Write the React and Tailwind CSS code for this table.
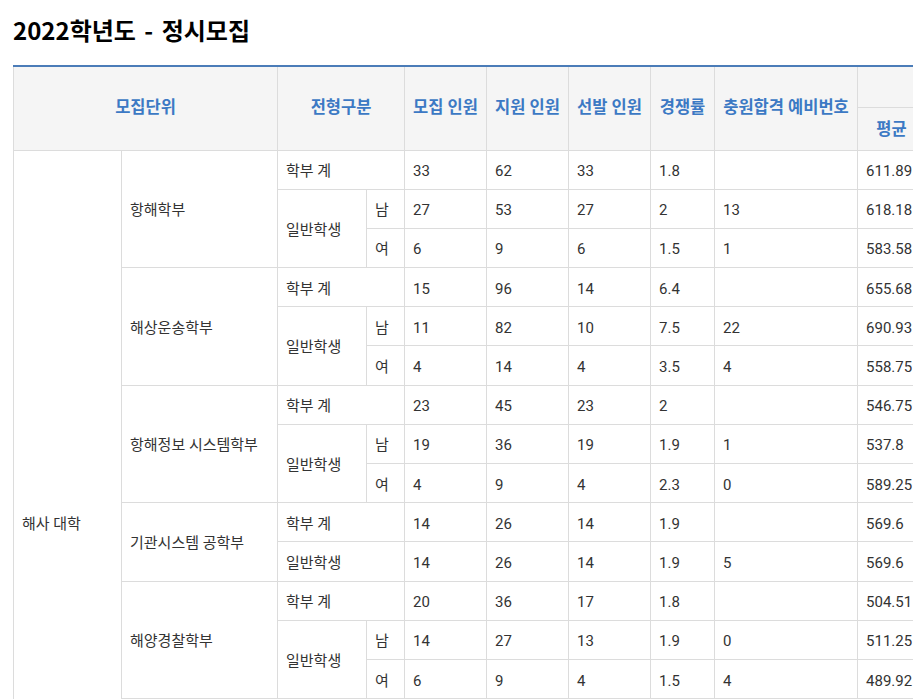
import React from 'react';

const units = [
  {
    name: '항해학부',
    rows: [
      { type: '학부 계', v: ['33', '62', '33', '1.8', '', '611.89', '651.20', '570.40'] },
      { type: '일반학생', g: '남', v: ['27', '53', '27', '2', '13', '618.18', '651.20', '590.10'] },
      { g: '여', v: ['6', '9', '6', '1.5', '1', '583.58', '612.30', '570.40'] },
    ],
  },
  {
    name: '해상운송학부',
    rows: [
      { type: '학부 계', v: ['15', '96', '14', '6.4', '', '655.68', '712.50', '540.20'] },
      { type: '일반학생', g: '남', v: ['11', '82', '10', '7.5', '22', '690.93', '712.50', '660.10'] },
      { g: '여', v: ['4', '14', '4', '3.5', '4', '558.75', '590.40', '540.20'] },
    ],
  },
  {
    name: '항해정보 시스템학부',
    rows: [
      { type: '학부 계', v: ['23', '45', '23', '2', '', '546.75', '610.20', '500.30'] },
      { type: '일반학생', g: '남', v: ['19', '36', '19', '1.9', '1', '537.8', '601.50', '500.30'] },
      { g: '여', v: ['4', '9', '4', '2.3', '0', '589.25', '610.20', '560.10'] },
    ],
  },
  {
    name: '기관시스템 공학부',
    rows: [
      { type: '학부 계', v: ['14', '26', '14', '1.9', '', '569.6', '620.40', '520.80'] },
      { type: '일반학생', v: ['14', '26', '14', '1.9', '5', '569.6', '620.40', '520.80'] },
    ],
  },
  {
    name: '해양경찰학부',
    rows: [
      { type: '학부 계', v: ['20', '36', '17', '1.8', '', '504.51', '560.30', '450.20'] },
      { type: '일반학생', g: '남', v: ['14', '27', '13', '1.9', '0', '511.25', '560.30', '460.70'] },
      { g: '여', v: ['6', '9', '4', '1.5', '4', '489.92', '530.10', '450.20'] },
    ],
  },
  {
    name: '기관공학부',
    rows: [
      { type: '학부 계', v: ['18', '30', '18', '1.7', '', '540.12', '590.00', '500.10'] },
      { type: '일반학생', g: '남', v: ['15', '25', '15', '1.7', '3', '542.30', '590.00', '500.10'] },
      { g: '여', v: ['3', '5', '3', '1.7', '1', '530.44', '560.20', '510.00'] },
    ],
  },
  {
    name: '해양플랜트 운영학과',
    rows: [
      { type: '학부 계', v: ['10', '18', '10', '1.8', '', '520.40', '570.30', '480.50'] },
      { type: '일반학생', v: ['10', '18', '10', '1.8', '2', '520.40', '570.30', '480.50'] },
    ],
  },
];

const totalRows = units.reduce((n, u) => n + u.rows.length, 0);

const td = 'border border-[#dcdcdc] px-[8px] pt-[3px] text-left align-middle font-normal leading-[20px]';
const th = 'border border-[#dcdcdc] px-[8px] text-center align-middle font-bold text-[#3c79c4] text-[16.5px] leading-[22px]';

function UnitRows({ unit, first }) {
  return unit.rows.map((r, i) => (
    <tr key={i} className="h-[39.2px]">
      {first && i === 0 && (
        <td rowSpan={totalRows} className={td}>
          해사 대학
        </td>
      )}
      {i === 0 && (
        <td rowSpan={unit.rows.length} className={td}>
          {unit.name}
        </td>
      )}
      {r.type && (r.g ? (
        <td rowSpan={2} className={td}>{r.type}</td>
      ) : (
        <td colSpan={2} className={td}>{r.type}</td>
      ))}
      {r.g && <td className={td}>{r.g}</td>}
      {r.v.map((v, k) => (
        <td key={k} className={td}>{v}</td>
      ))}
    </tr>
  ));
}

export default function App() {
  return (
    <div
      className="bg-white min-h-screen pl-[13px] pt-[15px] text-[#333] text-[15px]"
      style={{ fontFamily: 'Roboto, "Noto Sans CJK KR", sans-serif' }}
    >
      <h2
        className="text-[24px] leading-[30px] font-bold text-black mb-[20px] [word-spacing:3px]"
        style={{ fontFamily: '"Noto Sans CJK KR", "Noto Sans", sans-serif' }}
      >
        2022학년도 - 정시모집
      </h2>

      <div className="w-[900px] overflow-hidden">
        <table className="table-fixed border-collapse w-[1048px] border-t-2 border-t-[#4b7cb8]">
          <colgroup>
            <col className="w-[108px]" />
            <col className="w-[156px]" />
            <col className="w-[89px]" />
            <col className="w-[38px]" />
            <col className="w-[82px]" />
            <col className="w-[82px]" />
            <col className="w-[82px]" />
            <col className="w-[64px]" />
            <col className="w-[143px]" />
            <col className="w-[68px]" />
            <col className="w-[68px]" />
            <col className="w-[68px]" />
          </colgroup>
          <thead className="bg-[#f5f5f5]">
            <tr className="h-[41px]">
              <th colSpan={2} rowSpan={2} className={th}>모집단위</th>
              <th colSpan={2} rowSpan={2} className={th}>전형구분</th>
              <th rowSpan={2} className={th + ' px-0'}>모집 인원</th>
              <th rowSpan={2} className={th + ' px-0'}>지원 인원</th>
              <th rowSpan={2} className={th + ' px-0'}>선발 인원</th>
              <th rowSpan={2} className={th + ' px-0'}>경쟁률</th>
              <th rowSpan={2} className={th + ' px-0'}>충원합격 예비번호</th>
              <th colSpan={3} className={th}>수능 백분위</th>
            </tr>
            <tr className="h-[43px]">
              <th className={th + ' pt-[3px]'}>평균</th>
              <th className={th + ' pt-[3px]'}>최고</th>
              <th className={th + ' pt-[3px]'}>최저</th>
            </tr>
          </thead>
          <tbody>
            {units.map((u, i) => (
              <UnitRows key={u.name} unit={u} first={i === 0} />
            ))}
          </tbody>
        </table>
      </div>
    </div>
  );
}
